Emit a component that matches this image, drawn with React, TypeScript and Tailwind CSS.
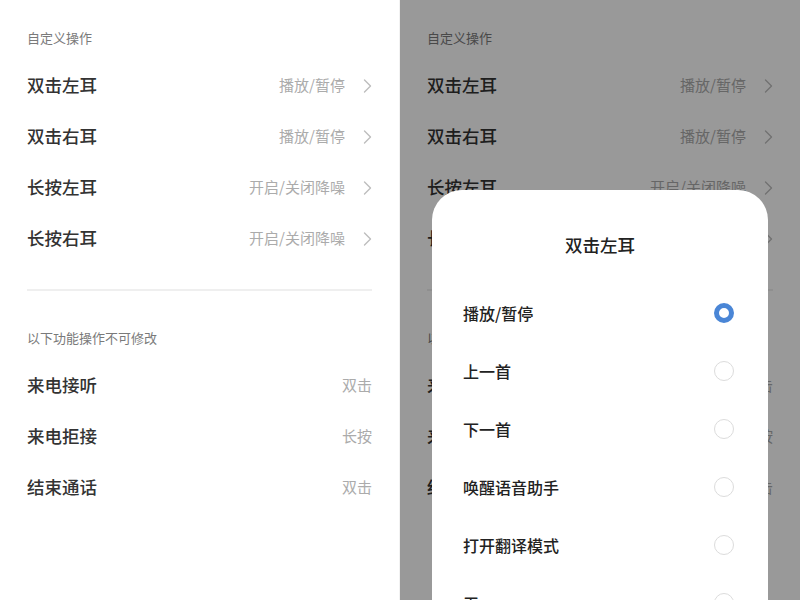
const custom = [
  { label: "双击左耳", value: "播放/暂停" },
  { label: "双击右耳", value: "播放/暂停" },
  { label: "长按左耳", value: "开启/关闭降噪" },
  { label: "长按右耳", value: "开启/关闭降噪" },
];

const fixed = [
  { label: "来电接听", value: "双击" },
  { label: "来电拒接", value: "长按" },
  { label: "结束通话", value: "双击" },
];

const options = ["播放/暂停", "上一首", "下一首", "唤醒语音助手", "打开翻译模式", "无"];

function Chevron() {
  return (
    <svg width="9" height="14" viewBox="0 0 9 14" fill="none" className="ml-[18px]">
      <path d="M1.5 1 L7.5 7 L1.5 13" stroke="#bdbdbd" strokeWidth="1.4" strokeLinecap="round" strokeLinejoin="round" />
    </svg>
  );
}

function Settings() {
  return (
    <div className="px-[27px]">
      <div className="h-[60px] pt-[30px] text-[13px] leading-[16px] text-[#7a7a7a]">自定义操作</div>
      {custom.map((row) => (
        <div key={row.label} className="h-[51px] flex items-center justify-between">
          <span className="text-[17.5px] font-medium text-[#333]">{row.label}</span>
          <div className="flex items-center">
            <span className="text-[15px] text-[#ababab]">{row.value}</span>
            <Chevron />
          </div>
        </div>
      ))}
      <div className="mt-[25px] h-[2px] bg-[#efefef]" />
      <div className="h-[69px] pt-[39px] text-[13px] leading-[16px] text-[#7a7a7a]">以下功能操作不可修改</div>
      {fixed.map((row) => (
        <div key={row.label} className="h-[51px] flex items-center justify-between">
          <span className="text-[17.5px] font-medium text-[#333]">{row.label}</span>
          <span className="text-[15px] text-[#ababab]">{row.value}</span>
        </div>
      ))}
    </div>
  );
}

export default function App() {
  return (
    <div
      className="w-[800px] h-[600px] flex overflow-hidden bg-white"
      style={{ fontFamily: '"Noto Sans CJK SC", "Noto Sans", sans-serif' }}
    >
      <div className="w-[400px] h-[600px] bg-white border-r border-[#f2f2f2]">
        <Settings />
      </div>
      <div className="relative w-[400px] h-[600px] bg-white overflow-hidden">
        <Settings />
        <div className="absolute inset-0 bg-black/40" />
        <div className="absolute left-[32px] right-[32px] top-[190px] h-[460px] bg-white rounded-[30px] pt-[37px]">
          <div className="h-[36px] flex items-center justify-center text-[17.5px] font-medium text-[#222]">双击左耳</div>
          <div className="mt-[21px] pl-[31px] pr-[34px]">
            {options.map((opt, i) => (
              <div key={opt} className="h-[58px] flex items-center justify-between">
                <span className="text-[16px] font-medium text-[#222]">{opt}</span>
                {i === 0 ? (
                  <span className="w-[20px] h-[20px] rounded-full border-[5px] border-[#4a86d6]" />
                ) : (
                  <span className="w-[20px] h-[20px] rounded-full border-[1.5px] border-[#dcdcdc]" />
                )}
              </div>
            ))}
          </div>
        </div>
      </div>
    </div>
  );
}
